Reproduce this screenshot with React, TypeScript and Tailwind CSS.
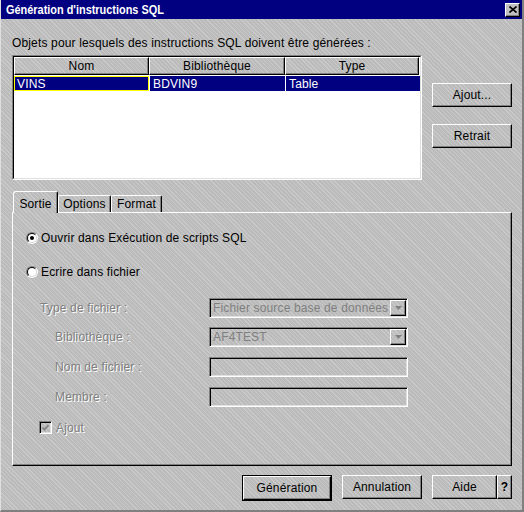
import type { ReactNode } from "react";

const texture =
  "bg-[#c0c0c0] bg-[image:repeating-linear-gradient(45deg,#c9c9c9_0px,#c9c9c9_1px,#bbbbbb_1px,#bbbbbb_3px)]";
const raised =
  "border border-t-white border-l-white border-r-black border-b-black shadow-[inset_-1px_-1px_0_#808080]";
const sunken =
  "border border-t-[#808080] border-l-[#808080] border-r-white border-b-white shadow-[inset_1px_1px_0_#000,inset_-1px_-1px_0_#dfdfdf]";
const etched = "text-[#808080] [text-shadow:1px_1px_0_#fff]";

function Button({ children, className = "" }: { children: ReactNode; className?: string }) {
  return (
    <button
      type="button"
      className={`${raised} ${texture} flex h-[24px] items-center justify-center text-[12px] text-black ${className}`}
    >
      {children}
    </button>
  );
}

function Radio({ checked }: { checked?: boolean }) {
  return (
    <span className="flex h-[12px] w-[12px] items-center justify-center rounded-full border border-t-[#808080] border-l-[#808080] border-r-white border-b-white">
      <span className="flex h-[10px] w-[10px] items-center justify-center rounded-full border border-t-black border-l-black border-r-[#dfdfdf] border-b-[#dfdfdf] bg-white">
        {checked ? <span className="h-[4px] w-[4px] rounded-full bg-black" /> : null}
      </span>
    </span>
  );
}

function Combo({ value }: { value: string }) {
  return (
    <div className={`${sunken} ${texture} flex h-[20px] w-[199px] items-center overflow-hidden`}>
      <span className="flex-1 overflow-hidden whitespace-nowrap pl-[3px] text-[12px] text-[#808080]">{value}</span>
      <span className={`${raised} ${texture} mr-[1px] flex h-[16px] w-[16px] shrink-0 items-center justify-center`}>
        <svg width="7" height="4" viewBox="0 0 7 4">
          <path d="M0 0h7L3.5 4z" fill="#808080" />
        </svg>
      </span>
    </div>
  );
}

function Field() {
  return <div className={`${sunken} ${texture} h-[20px] w-[199px]`} />;
}

function FieldRow({ label, indent, children, className = "" }: { label: string; indent: string; children: ReactNode; className?: string }) {
  return (
    <div className={`flex h-[20px] items-center ${className}`}>
      <span className={`w-[183px] text-[12px] ${etched} ${indent}`}>{label}</span>
      {children}
    </div>
  );
}

export default function App() {
  return (
    <div
      className={`${texture} flex h-[512px] w-[524px] flex-col border-b-2 border-l border-r-2 border-b-[#808080] border-l-[#dfdfdf] border-r-[#808080] font-['Liberation_Sans',Arial,sans-serif] text-[12px] tracking-[0.15px] text-black`}
    >
      <div className="flex h-[19px] shrink-0 items-center justify-between bg-[#000080] pl-[5px] pr-[2px]">
        <span className="origin-left scale-x-[0.84] whitespace-nowrap text-[13px] font-bold tracking-[0px] text-white">
          Génération d'instructions SQL
        </span>
        <span className={`${raised} flex h-[14px] w-[15px] items-center justify-center bg-[#c0c0c0]`}>
          <svg width="8" height="7" viewBox="0 0 8 7">
            <path d="M0.5 0.5l7 6M7.5 0.5l-7 6" stroke="#000" strokeWidth="1.6" />
          </svg>
        </span>
      </div>

      <div className="flex flex-col pl-[11px] pr-[10px]">
        <p className="mt-[17px] h-[14px] leading-[14px]">Objets pour lesquels des instructions SQL doivent être générées :</p>

        <div className="mt-[5px] flex">
          <div className="h-[125px] w-[411px] border border-t-[#808080] border-l-[#808080] border-r-white border-b-white">
            <div className="h-full w-full border border-t-black border-l-black border-r-[#dfdfdf] border-b-[#dfdfdf] bg-white">
              <div className="flex h-[18px]">
                {[
                  ["Nom", "w-[135px]"],
                  ["Bibliothèque", "w-[136px]"],
                  ["Type", "w-[134px]"],
                ].map(([name, w]) => (
                  <div key={name} className={`${raised} ${texture} ${w} flex items-center justify-center leading-none`}>
                    {name}
                  </div>
                ))}
              </div>
              <div className="mt-[1px] flex h-[15px] text-white">
                <div className="flex w-[135px] items-center border border-[#ffff00] bg-[#000080] pl-[2px]">VINS</div>
                <div className="w-[1px] bg-white" />
                <div className="flex w-[135px] items-center bg-[#000080] pl-[3px]">BDVIN9</div>
                <div className="w-[1px] bg-white" />
                <div className="flex w-[134px] items-center bg-[#000080] pl-[3px]">Table</div>
              </div>
            </div>
          </div>
          <div className="ml-[10px] flex flex-col pt-[28px]">
            <Button className="w-[80px]">Ajout...</Button>
            <Button className="mt-[17px] w-[80px]">Retrait</Button>
          </div>
        </div>

        <div className="mt-[11px] flex items-end">
          <div className={`relative z-10 -mb-[1px] ml-[1px] flex h-[22px] w-[45px] justify-center rounded-tl-[3px] rounded-tr-[2px] border-l border-r border-t border-l-white border-r-black border-t-white pt-[3px] shadow-[inset_-1px_0_0_#808080] ${texture}`}>
            Sortie
          </div>
          <div className={`flex h-[17px] w-[53px] items-center justify-center rounded-tl-[2px] rounded-tr-[2px] border-l border-r border-t border-l-white border-r-black border-t-white shadow-[inset_-1px_0_0_#808080] ${texture}`}>
            Options
          </div>
          <div className={`flex h-[17px] w-[51px] items-center justify-center rounded-tl-[2px] rounded-tr-[2px] border-l border-r border-t border-l-white border-r-black border-t-white shadow-[inset_-1px_0_0_#808080] ${texture}`}>
            Format
          </div>
        </div>

        <div className={`${raised} flex h-[254px] w-[500px] flex-col pl-[13px]`}>
          <div className="mt-[18px] flex h-[14px] items-center gap-[3px]">
            <Radio checked />
            <span>Ouvrir dans Exécution de scripts SQL</span>
          </div>
          <div className="mt-[20px] flex h-[14px] items-center gap-[3px]">
            <Radio />
            <span>Ecrire dans fichier</span>
          </div>

          <FieldRow label="Type de fichier :" indent="pl-[14px]" className="mt-[19px]">
            <Combo value="Fichier source base de données" />
          </FieldRow>
          <FieldRow label="Bibliothèque :" indent="pl-[29px]" className="mt-[9px]">
            <Combo value="AF4TEST" />
          </FieldRow>
          <FieldRow label="Nom de fichier :" indent="pl-[29px]" className="mt-[10px]">
            <Field />
          </FieldRow>
          <FieldRow label="Membre :" indent="pl-[29px]" className="mt-[10px]">
            <Field />
          </FieldRow>

          <div className="mt-[14px] flex h-[13px] items-center gap-[4px] pl-[13px]">
            <span className={`${sunken} ${texture} flex h-[13px] w-[13px] items-center justify-center`}>
              <svg width="7" height="7" viewBox="0 0 7 7">
                <path d="M0.5 3.5l2 2 4-4.5" stroke="#808080" strokeWidth="1.6" fill="none" />
              </svg>
            </span>
            <span className={etched}>Ajout</span>
          </div>
        </div>

        <div className="mt-[9px] flex justify-end">
          <div className="border border-black">
            <Button className="h-[22px] w-[88px]">Génération</Button>
          </div>
          <Button className="ml-[10px] w-[80px]">Annulation</Button>
          <Button className="ml-[10px] w-[65px]">Aide</Button>
          <Button className="w-[15px] font-bold">?</Button>
        </div>
      </div>
    </div>
  );
}
